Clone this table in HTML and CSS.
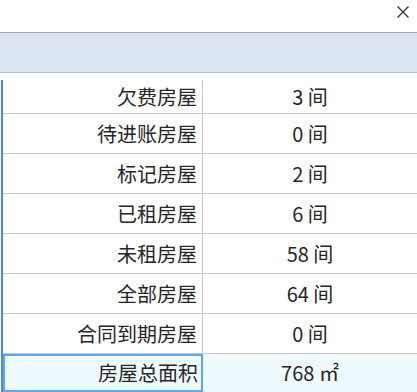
FILE: index.html
```html
<!DOCTYPE html>
<html lang="zh">
<head>
<meta charset="utf-8">
<link rel="stylesheet" href="styles.css">
</head>
<body>
<div class="titlebar">
  <svg class="close" width="14" height="14" viewBox="0 0 14 14"><path d="M1.5 1.5L12.5 12.5M12.5 1.5L1.5 12.5" stroke="#2f2f2f" stroke-width="1.3" fill="none"/></svg>
</div>
<div class="thead"></div>
<div class="tbody">
  <div class="row first"><div class="label">欠费房屋</div><div class="value">3 间</div></div>
  <div class="row"><div class="label">待进账房屋</div><div class="value">0 间</div></div>
  <div class="row"><div class="label">标记房屋</div><div class="value">2 间</div></div>
  <div class="row"><div class="label">已租房屋</div><div class="value">6 间</div></div>
  <div class="row"><div class="label">未租房屋</div><div class="value">58 间</div></div>
  <div class="row"><div class="label">全部房屋</div><div class="value">64 间</div></div>
  <div class="row"><div class="label">合同到期房屋</div><div class="value">0 间</div></div>
  <div class="row selected"><div class="label">房屋总面积</div><div class="value">768 ㎡</div></div>
</div>
</body>
</html>
```
FILE: styles.css
```css
* { box-sizing: border-box; }
html, body { margin: 0; padding: 0; background: #fff; }
body {
  width: 417px;
  height: 392px;
  overflow: hidden;
  font-family: "Noto Sans CJK SC", "Noto Sans", sans-serif;
  color: #262626;
}
.titlebar {
  height: 32px;
  display: flex;
  justify-content: flex-end;
  align-items: center;
  padding-right: 7px;
  padding-bottom: 8px;
}
.close { display: block; }
.thead {
  height: 41px;
  background: #dce6f3;
  border-top: 1px solid #a8a8a8;
  border-bottom: 1px solid #b6c1d0;
}
.tbody {
  margin-top: 7px;
  margin-left: 1px;
  border-left: 2px solid #4a89cc;
}
.row {
  display: grid;
  grid-template-columns: 200px 1fr;
  height: 40px;
  border-bottom: 1px solid #c6c6c6;
  font-size: 20px;
  line-height: 1;
}
.row.first { height: 34px; }
.label {
  display: flex;
  align-items: center;
  justify-content: flex-end;
  padding-right: 5px;
  border-right: 1px solid #c6c6c6;
}
.value {
  display: flex;
  align-items: center;
  justify-content: center;
}
.row.selected {
  background: #eefaff;
  border-bottom: none;
  height: 38px;
}
.row.selected .label {
  border: 2px solid #5fa6ec;
  padding-right: 3px;
}
```
